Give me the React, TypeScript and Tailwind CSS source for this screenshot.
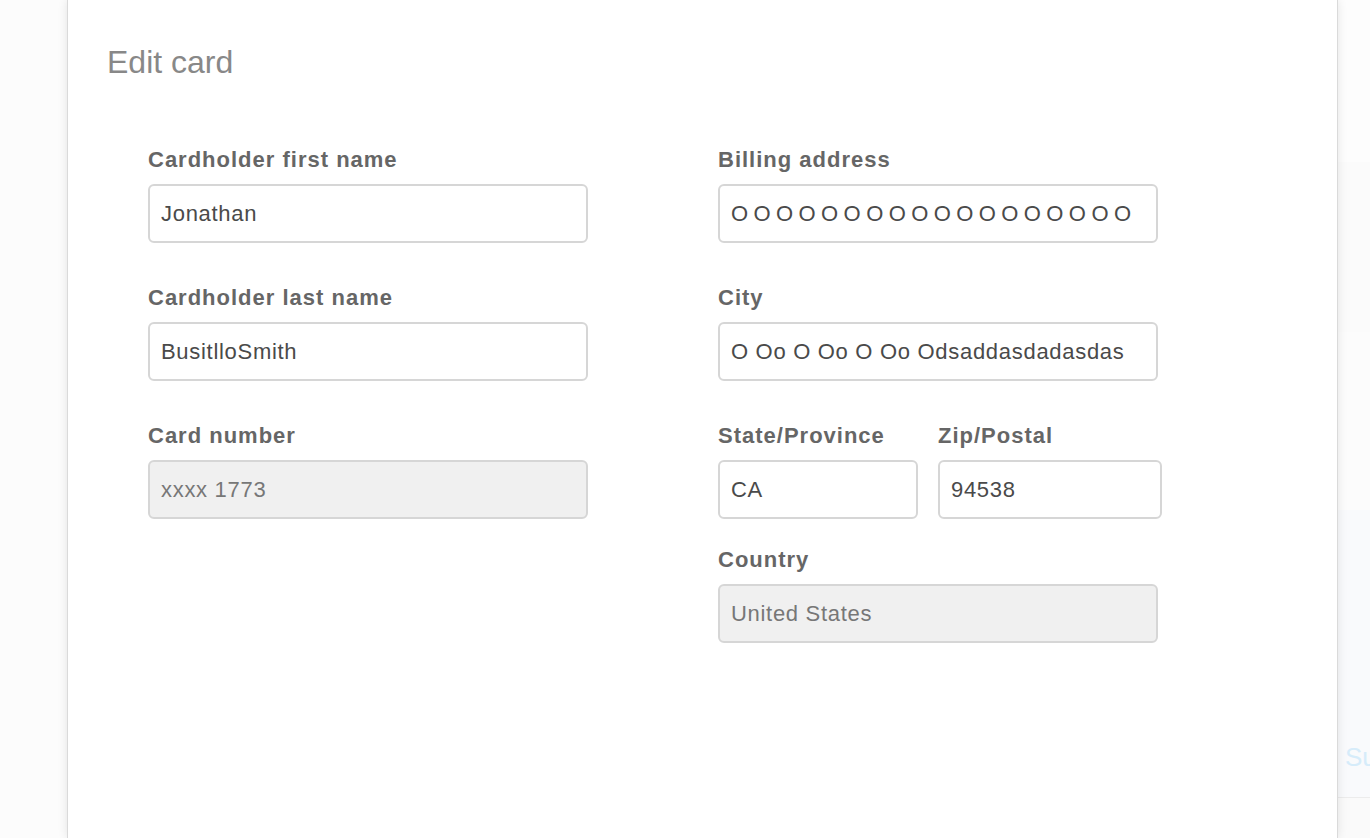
import React from 'react';

interface FieldProps {
  label: string;
  value: string;
  muted?: boolean;
  tight?: boolean;
  className?: string;
}

function Field({ label, value, muted, tight, className }: FieldProps) {
  return (
    <div className={className}>
      <label className="block h-6 text-[22px] leading-6 font-bold tracking-[1px] text-[#666] whitespace-nowrap">
        {label}
      </label>
      <input
        readOnly
        defaultValue={value}
        className={
          (muted
            ? 'mt-3 block h-[59px] w-full rounded-md border-2 border-[#d6d6d6] bg-[#f0f0f0] pl-[11px] pr-3 text-[22px] text-[#777] outline-none'
            : 'mt-3 block h-[59px] w-full rounded-md border-2 border-[#d6d6d6] bg-white pl-[11px] pr-3 text-[22px] text-[#4a4a4a] outline-none') +
          (tight ? ' tracking-[-0.35px]' : ' tracking-[0.7px]')
        }
      />
    </div>
  );
}

const billing = Array(18).fill('O').join(' ');

export default function App() {
  return (
    <div className="flex h-[838px] w-full overflow-hidden bg-[#fcfcfc] font-['Liberation_Sans',Arial,sans-serif]">
      {/* dimmed page on the left */}
      <div className="w-[68px] shrink-0 bg-[#fcfcfc]" />

      {/* modal */}
      <div className="relative z-10 w-[1269px] shrink-0 bg-white pl-[39px] pt-[46px] shadow-[0_0_0_1px_#dadada,0_0_10px_rgba(0,0,0,0.12)]">
        <h2 className="text-[32px] leading-8 font-normal text-[#888]">Edit card</h2>

        <div className="mt-[70px] flex gap-[130px] pl-[41px]">
          <div className="w-[440px]">
            <Field label="Cardholder first name" value="Jonathan" />
            <Field className="mt-[43px]" label="Cardholder last name" value="BusitlloSmith" />
            <Field className="mt-[43px]" label="Card number" value="xxxx 1773" muted />
          </div>

          <div className="w-[440px]">
            <Field label="Billing address" value={billing} tight />
            <Field className="mt-[43px]" label="City" value="O Oo O Oo O Oo Odsaddasdadasdas" />
            <div className="mt-[43px] flex gap-5">
              <Field className="w-[200px] shrink-0" label="State/Province" value="CA" />
              <Field className="w-[224px] shrink-0" label="Zip/Postal" value="94538" />
            </div>
            <Field className="mt-[29px]" label="Country" value="United States" muted />
          </div>
        </div>
      </div>

      {/* dimmed page on the right */}
      <div className="flex min-w-0 flex-1 flex-col">
        <div className="h-[162px] bg-[#fdfdfd]" />
        <div className="h-[170px] bg-[#fbfbfb]" />
        <div className="h-[178px] bg-[#fcfcfc]" />
        <div className="flex h-[287px] items-end bg-[#f9fafc] pb-6 pl-2">
          <span className="text-[26px] leading-8 text-[#d6ecfa] whitespace-nowrap">Submit</span>
        </div>
        <div className="flex-1 border-t border-[#ececec] bg-[#fafafa]" />
      </div>
    </div>
  );
}
